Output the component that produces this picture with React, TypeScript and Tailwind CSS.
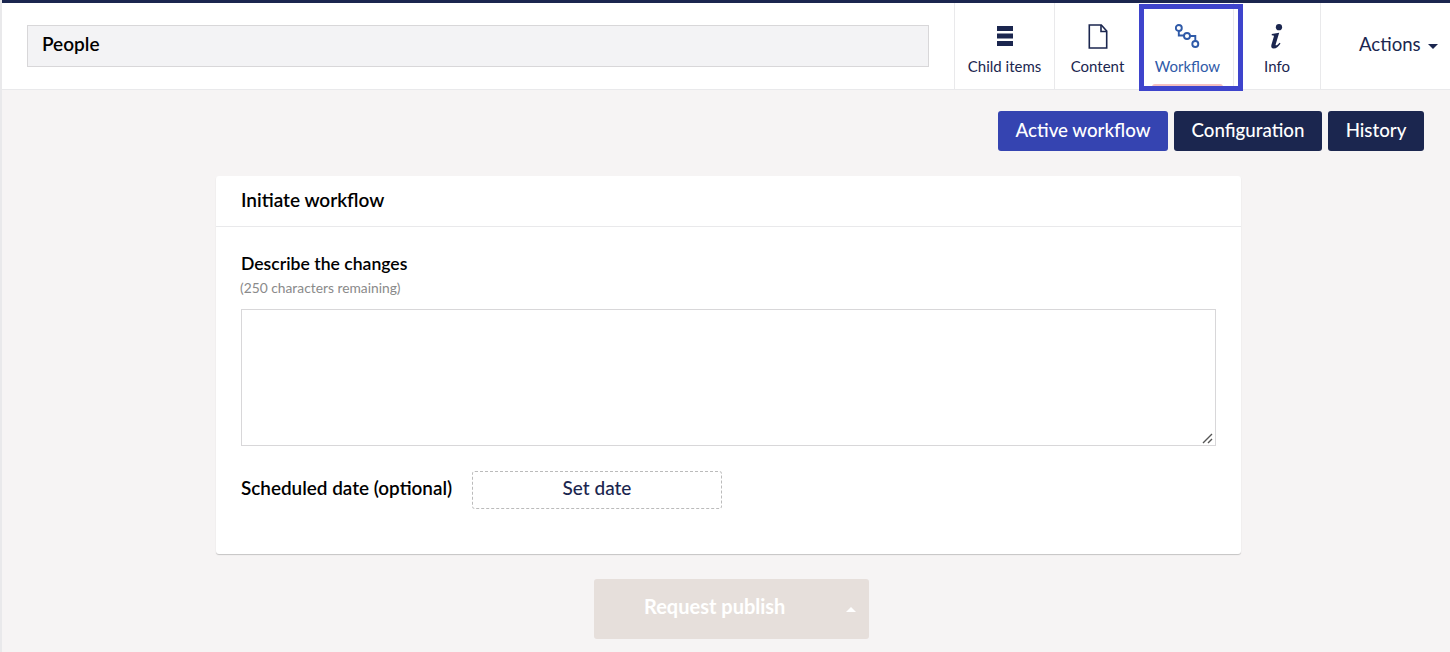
import React from "react";

function Tab({ label, icon, className = "" }: { label: string; icon: React.ReactNode; className?: string }) {
  return (
    <div className={`relative flex flex-none flex-col items-center border-l border-[#e9e9eb] ${className}`}>
      <div className="mt-[21px] flex h-[24px] items-center justify-center">{icon}</div>
      <div className="mt-[8px] text-[15px] leading-[20px] text-[#1b264f]">{label}</div>
    </div>
  );
}

export default function App() {
  return (
    <div className="relative h-[652px] overflow-hidden border-l-2 border-[#e9e9eb] bg-[#f6f4f4] font-['Lato','Liberation_Sans',sans-serif] [text-rendering:optimizeLegibility]">
      <div className="absolute left-[-2px] top-[252px] h-[46px] w-[2px] bg-[#fbe3df]" />
      <header className="-ml-[2px] flex h-[90px] border-t-[3px] border-b border-[#1b264f] border-b-[#e9e9eb] bg-white">
        <div className="w-[954px] flex-none pl-[27px] pr-[25px] pt-[22px]">
          <div className="h-[42px] border border-[#d8d7d9] bg-[#f3f3f5] pl-[14px] text-[19px] font-semibold leading-[36px] text-black">
            People
          </div>
        </div>
        <Tab
          label="Child items"
          className="w-[100px]"
          icon={
            <svg width="16" height="20" viewBox="0 0 16 20" fill="#1b264f">
              <rect y="0" width="16" height="5" />
              <rect y="7.5" width="16" height="5" />
              <rect y="15" width="16" height="5" />
            </svg>
          }
        />
        <Tab
          label="Content"
          className="w-[86px]"
          icon={
            <svg width="20" height="25" viewBox="0 0 20 25" fill="none" stroke="#1b264f" strokeWidth="1.6">
              <path d="M1.3 1h12l5.4 6v17H1.3z" />
              <path d="M13 1v6.5h5.7" />
            </svg>
          }
        />
        <div className="relative flex w-[93px] flex-none flex-col items-center pl-[2px]">
          <div className="mt-[21px] flex h-[24px] items-center justify-center">
            <svg width="25" height="25" viewBox="0 0 25 25" fill="none" stroke="#2f5aa8" strokeWidth="1.9">
              <circle cx="3.8" cy="4" r="3" />
              <circle cx="12" cy="12" r="3" />
              <circle cx="20.3" cy="20" r="3" />
              <path d="M3.8 7v4.5H9M15 12h5.3v5" />
            </svg>
          </div>
          <div className="mt-[8px] text-[15px] leading-[20px] text-[#2f5aa8]">Workflow</div>
          <div className="absolute left-[12px] top-[81px] h-[3px] w-[71px] rounded-t-[3px] bg-[#f5c0c0]" />
        </div>
        <Tab
          label="Info"
          className="w-[87px]"
          icon={
            <svg width="14" height="25" viewBox="0 0 13 24" fill="#1b264f">
              <circle cx="8.4" cy="3" r="3" />
              <path d="M1.5 9.5 8.6 8.3 5.2 19.6c-.3 1 .7 1.1 1.5.5.7-.5 1.5-1.3 2.2-2.2l1 .7C8.4 21 6 23.5 3.3 23.5c-2 0-2.7-1.4-2.2-3.3l2.4-8.3c.1-.6-.1-.9-.8-.9l-1.3-.1z" />
            </svg>
          }
        />
        <div className="flex flex-1 items-center border-l border-[#e9e9eb] pb-[2px] pl-[38px] text-[18.6px] text-[#1b264f]">
          Actions
          <span className="ml-[7px] mt-[2px] h-0 w-0 border-x-[5px] border-t-[5px] border-x-transparent border-t-[#1b264f]" />
        </div>
      </header>
      <div className="pointer-events-none absolute left-[1137px] top-[4px] h-[87px] w-[104px] border-[5px] border-[#3e44cc]" />

      <div className="mr-[26px] mt-[21px] flex justify-end gap-[6px]">
        <button className="h-[40px] w-[170px] rounded-[3px] bg-[#3544b1] pb-[2px] text-[18.7px] font-medium text-white">Active workflow</button>
        <button className="h-[40px] w-[148px] rounded-[3px] bg-[#1b264f] pb-[2px] text-[18.7px] font-medium text-white">Configuration</button>
        <button className="h-[40px] w-[96px] rounded-[3px] bg-[#1b264f] pb-[2px] text-[18.7px] font-medium text-white">History</button>
      </div>

      <section className="ml-[214px] mt-[25px] h-[378px] w-[1025px] rounded-[3px] bg-white shadow-[0_1px_1px_rgba(0,0,0,0.2)]">
        <div className="h-[51px] border-b border-[#e9e9eb] pl-[25px] text-[19px] font-semibold leading-[48px] text-black">
          Initiate workflow
        </div>
        <div className="px-[25px] pt-[26px]">
          <div className="text-[17.6px] font-semibold leading-[22px] text-black">Describe the changes</div>
          <div className="-ml-[1px] mt-[3px] text-[13.8px] leading-[20px] text-[#8a8a8a]">(250 characters remaining)</div>
          <div className="relative mt-[11px]">
            <textarea className="block h-[137px] w-full resize-none border border-[#d8d7d9] bg-white outline-none" />
            <svg className="absolute bottom-[2px] right-[2px]" width="12" height="12" viewBox="0 0 12 12" fill="none" stroke="#555555" strokeWidth="1.4">
              <path d="M1 11 10 2M6 11l4-4" />
            </svg>
          </div>
          <div className="mt-[25px] flex items-center">
            <div className="w-[231px] pb-[4px] text-[18.9px] font-semibold text-black">Scheduled date (optional)</div>
            <button className="h-[38px] w-[250px] rounded-[3px] border border-dashed border-[#bbbbbb] pb-[4px] text-[19px] font-medium text-[#1b264f]">
              Set date
            </button>
          </div>
        </div>
      </section>

      <div className="ml-[592px] mt-[25px] flex h-[60px] w-[275px] items-center rounded-[3px] bg-[#e6dfdb] text-white">
        <span className="mb-[6px] ml-[50px] w-[202px] text-[20px] font-bold">Request publish</span>
        <span className="h-0 w-0 border-x-[5px] border-b-[5px] border-x-transparent border-b-white" />
      </div>
    </div>
  );
}
